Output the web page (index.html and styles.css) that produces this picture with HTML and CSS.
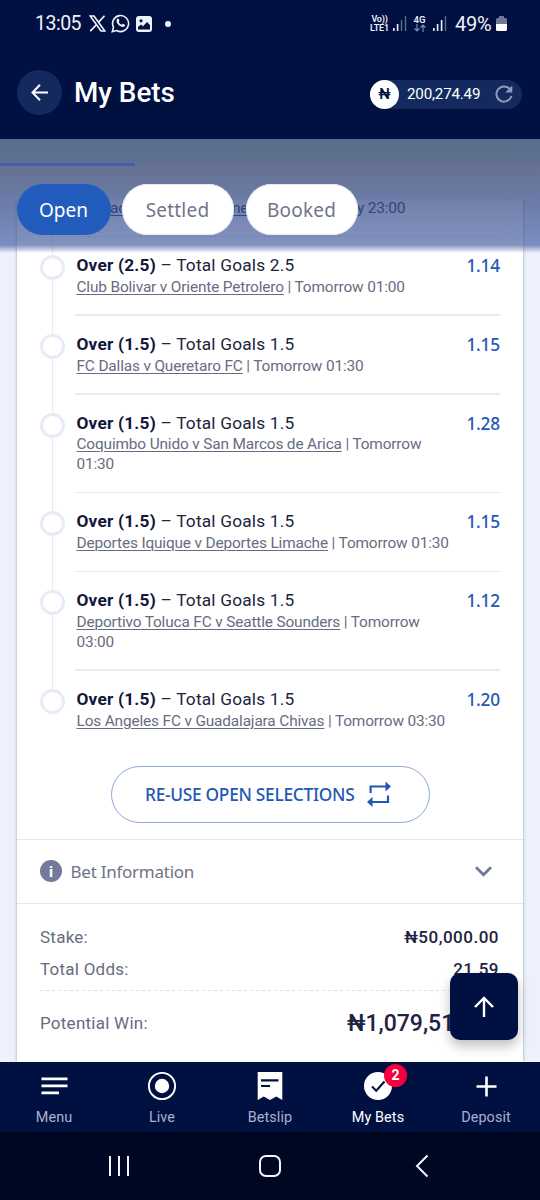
FILE: index.html
```html
<!DOCTYPE html>
<html lang="en">
<head>
<meta charset="utf-8">
<title>My Bets</title>
<link rel="stylesheet" href="styles.css">
</head>
<body>
<div class="app">
  <header class="top">
    <div class="status">
      <span class="clock">13:05</span>
      <svg class="s-x" width="17" height="17" viewBox="0 0 17 17" fill="none" stroke="#eef1fa"><path d="M1.200 1h3.800L15.800 16H12z" stroke-width="1.700"/><path d="M15.500.8 9.500 7.400M7.300 9.800 1.200 16.200" stroke-width="1.700"/></svg>
      <svg class="s-wa" width="19" height="19" viewBox="0 0 19 19"><path d="M1.300 17.700l1.200-4.500A8 8 0 1 1 5.700 16.500z" fill="none" stroke="#eef1fa" stroke-width="1.600"/><path d="M6.300 4.800c.5-.5 1.200-.3 1.400.2l.7 1.600c.1.500-.7 1.100-.6 1.400.6 1.300 1.600 2.200 2.900 2.700.400.100.9-1.100 1.400-.9l1.700.9c.5.300.2 1.300-.4 1.800-2.500 1.800-8.500-2.400-7.800-6 .1-.7.300-1.300.7-1.700z" fill="#eef1fa"/></svg>
      <svg class="s-img" width="16" height="16" viewBox="0 0 16 16"><rect width="16" height="16" rx="3" fill="#eef1fa"/><circle cx="5" cy="4.800" r="1.600" fill="#001041"/><path d="M2 13.500V11l3-2.500 2 1.800L11 6l3 3v4.500z" fill="#001041"/></svg>
      <i class="s-dot"></i>
      <span class="volte"><b>Vo))</b><b>LTE1</b></span>
      <svg class="s-sig1" width="14" height="15" viewBox="0 0 14 15" fill="#eef1fa"><path d="M0 12h1.600v3H0zM3.800 8h1.600v7H3.800z"/><path d="M7.800 4h1.400v11H7.800zM11.800 0h1.400v15h-1.400z" opacity=".4"/></svg>
      <span class="net"><b>4G</b><svg width="12" height="8" viewBox="0 0 12 8" fill="none" stroke="#818aac" stroke-width="1.200"><path d="M3 0v7M.5 4.500 3 7l2.500-2.500M9 8V1M6.500 3.500 9 1l2.500 2.500"/></svg></span>
      <svg class="s-sig2" width="14" height="15" viewBox="0 0 14 15" fill="#eef1fa"><path d="M0 12h1.600v3H0zM3.800 8h1.600v7H3.800zM7.800 4h1.600v11H7.800z"/><path d="M11.800 0h1.400v15h-1.400z" opacity=".4"/></svg>
      <span class="pct">49%</span>
      <svg class="s-bat" width="11" height="15" viewBox="0 0 11 15"><path d="M3 0h5v2h1.500Q11 2 11 3.500V8H0V3.500Q0 2 1.500 2H3z" fill="#6f7897"/><path d="M0 8h11v5.500q0 1.500-1.500 1.500h-8Q0 15 0 13.500z" fill="#fff"/></svg>
    </div>
    <div class="titlebar">
      <button class="back"><svg width="18" height="18" viewBox="0 0 18 18" fill="none" stroke="#fff" stroke-width="2"><path d="M17 8.500H1.500M9 .8 1.500 8.500 9 16.200"/></svg></button>
      <h1>My Bets</h1>
      <div class="balance">
        <span class="coin">₦</span><span class="amount">200,274.49</span>
        <svg width="18" height="18" viewBox="0 0 18 18" fill="none" stroke="#8f9bb9" stroke-width="2"><path d="M14.800 4A7.600 7.600 0 1 0 16.400 11"/><path d="M17.300.500V7.500H10.300z" fill="#8f9bb9" stroke="none"/></svg>
      </div>
    </div>
  </header>

  <main class="content">
    <div class="scroll">
      <section class="card">
        <div class="bets">
          <article class="bet cut">
            <div class="pieces"><u>ac</u><u>ne</u><span>y 23:00</span></div>
          </article>
          <article class="bet"><i class="ring"></i><div class="body"><div class="name"><b>Over (2.5)</b> – Total Goals 2.5</div><div class="meta"><u>Club Bolivar v Oriente Petrolero</u> | Tomorrow 01:00</div></div><span class="odd">1.14</span></article>
          <article class="bet"><i class="ring"></i><div class="body"><div class="name"><b>Over (1.5)</b> – Total Goals 1.5</div><div class="meta"><u>FC Dallas v Queretaro FC</u> | Tomorrow 01:30</div></div><span class="odd">1.15</span></article>
          <article class="bet tall"><i class="ring"></i><div class="body"><div class="name"><b>Over (1.5)</b> – Total Goals 1.5</div><div class="meta"><u>Coquimbo Unido v San Marcos de Arica</u> | Tomorrow<br>01:30</div></div><span class="odd">1.28</span></article>
          <article class="bet"><i class="ring"></i><div class="body"><div class="name"><b>Over (1.5)</b> – Total Goals 1.5</div><div class="meta"><u>Deportes Iquique v Deportes Limache</u> | Tomorrow 01:30</div></div><span class="odd">1.15</span></article>
          <article class="bet tall"><i class="ring"></i><div class="body"><div class="name"><b>Over (1.5)</b> – Total Goals 1.5</div><div class="meta"><u>Deportivo Toluca FC v Seattle Sounders</u> | Tomorrow<br>03:00</div></div><span class="odd">1.12</span></article>
          <article class="bet last"><i class="ring"></i><div class="body"><div class="name"><b>Over (1.5)</b> – Total Goals 1.5</div><div class="meta"><u>Los Angeles FC v Guadalajara Chivas</u> | Tomorrow 03:30</div></div><span class="odd">1.20</span></article>
        </div>
        <button class="reuse"><span>RE-USE OPEN SELECTIONS</span><svg width="24" height="26" viewBox="0 0 24 26" fill="none" stroke="#1f59b5" stroke-width="2.200"><path d="M3.600 12V5.500H19M21 14.500v6.500H5"/><path d="M18.500.500 24 5.500l-5.500 5zM5.500 16 0 21l5.500 5z" fill="#1f59b5" stroke="none"/></svg></button>
        <div class="info"><span class="i-icon">i</span><span class="i-text">Bet Information</span><svg width="17" height="11" viewBox="0 0 17 11" fill="none" stroke="#70799a" stroke-width="2.800"><path d="M1 1.200l7.500 7.500L16 1.200"/></svg></div>
        <div class="totals">
          <div class="line"><span>Stake:</span><b>₦50,000.00</b></div>
          <div class="line second"><span>Total Odds:</span><b>21.59</b></div>
          <svg class="dash" height="1" width="460"><path d="M0 .5h460" stroke="#dfe3f4" stroke-dasharray="3.500 2.500"/></svg>
          <div class="line win"><span>Potential Win:</span><b>₦1,079,51</b></div>
        </div>
      </section>
    </div>
    <div class="veil"><i class="progress"></i></div>
    <nav class="tabs"><button class="tab on">Open</button><button class="tab">Settled</button><button class="tab">Booked</button></nav>
    <button class="up"><svg width="20" height="21" viewBox="0 0 20 21" fill="none" stroke="#fff" stroke-width="2.400"><path d="M10 21V2M1 11l9-9 9 9"/></svg></button>
  </main>

  <nav class="bottom">
    <a class="item"><svg width="28" height="28" viewBox="0 0 28 28" fill="#fff"><path d="M1.500 5.500h26v2.700h-26zM1.500 12.600h26v2.700h-26zM1.500 19.500h17.500v2.700H1.500z"/></svg><span>Menu</span></a>
    <a class="item"><svg width="28" height="28" viewBox="0 0 28 28"><circle cx="14" cy="14" r="13.100" fill="none" stroke="#fff" stroke-width="1.900"/><circle cx="14" cy="14" r="7.200" fill="#fff"/></svg><span>Live</span></a>
    <a class="item"><svg width="28" height="28" viewBox="0 0 28 28"><path d="M1.700 0h24.600v28L20.300 24.500 14 28l-6.300-3.500L1.700 28z" fill="#fff"/><path d="M5 8.300h17.500M5 14h9" stroke="#001041" stroke-width="2.200"/></svg><span>Betslip</span></a>
    <a class="item active"><svg width="28" height="28" viewBox="0 0 28 28"><circle cx="14" cy="14" r="14" fill="#fff"/><path d="M8 14.500l4.200 4.200L20.500 9.500" fill="none" stroke="#001041" stroke-width="2"/></svg><em class="badge">2</em><span>My Bets</span></a>
    <a class="item"><svg width="28" height="28" viewBox="0 0 28 28" fill="none" stroke="#fff" stroke-width="2.600"><path d="M14.500 4.500v20M4.500 14.500h20"/></svg><span>Deposit</span></a>
  </nav>
  <footer class="system">
    <svg width="22" height="22" viewBox="0 0 22 22" stroke="#f4f6fc" stroke-width="2"><path d="M2 1v20M11 1v20M20 1v20"/></svg>
    <svg width="24" height="24" viewBox="0 0 24 24" fill="none" stroke="#f4f6fc" stroke-width="2"><rect x="2" y="2" width="20" height="20" rx="6"/></svg>
    <svg width="14" height="24" viewBox="0 0 14 24" fill="none" stroke="#f4f6fc" stroke-width="2"><path d="M12.500 1.500 2 12l10.500 10.500"/></svg>
  </footer>
</div>
</body>
</html>
```
FILE: styles.css
```css
* { box-sizing: border-box; }
body { margin: 0; font-family: Roboto, "Noto Sans", sans-serif; }
button { font: inherit; border: 0; padding: 0; }
svg { display: block; flex: none; }
.app { width: 540px; height: 1200px; display: flex; flex-direction: column; overflow: hidden; }

/* header */
.top { height: 139px; background: #001041; color: #fff; flex: none; }
.status { height: 47px; padding-left: 35px; display: flex; align-items: center; color: #eef1fa; }
.clock { font-size: 19.500px; width: 54px; white-space: nowrap; letter-spacing: -.5px; }
.s-wa { margin-left: 5px; }
.s-img { margin-left: 6px; }
.s-dot { width: 6px; height: 6px; border-radius: 50%; background: #eef1fa; margin-left: 13px; }
.volte { display: flex; flex-direction: column; align-items: center; margin-left: 199px; width: 19px; font-size: 9px; line-height: 8.500px; }
.volte b { font-weight: 600; letter-spacing: -.2px; }
.s-sig1 { margin-left: 4px; }
.net { display: flex; flex-direction: column; align-items: center; margin-left: 6px; width: 13px; font-size: 9.500px; line-height: 9px; }
.net b { font-weight: 600; }
.s-sig2 { margin-left: 7px; }
.pct { font-size: 20px; margin-left: 8px; width: 38px; letter-spacing: -.3px; }
.s-bat { margin-left: 3px; }
.titlebar { display: flex; align-items: center; height: 91px; padding: 0 18px 0 17px; }
.back { width: 45px; height: 45px; border-radius: 50%; background: #142a5e; display: flex; align-items: center; justify-content: center; }
h1 { margin: 0 0 0 12px; font-size: 27.800px; font-weight: 500; line-height: 34px; }
.balance { margin-left: auto; width: 152px; height: 29px; margin-top: 3px; border-radius: 15px; background: #142a5e; display: flex; align-items: center; }
.coin { width: 29px; height: 29px; border-radius: 50%; background: #fff; color: #001041; font-weight: 500; font-size: 15px; display: flex; align-items: center; justify-content: center; }
.amount { width: 88px; margin-left: 8px; font-size: 15.200px; letter-spacing: -.2px; }

/* page */
.content { position: relative; height: 923px; flex: none; background: #ecf1fb; padding-top: 61px; }
.scroll { height: 862px; overflow: hidden; padding: 0 17px; }
.card { background: #fff; height: 862px; box-shadow: 0 0 3px rgba(40,50,90,.4); }
.bets { padding: 0 23px; }
.bet { position: relative; display: flex; height: 78.800px; }
.bet.tall { height: 98.700px; }
.bet.cut { height: 37.200px; }
.bet::before { content: ""; position: absolute; left: 11.500px; top: 0; bottom: 0; width: 1.500px; background: #e6ebf6; }
.bet.last::before { bottom: auto; height: 30px; }
.bet::after { content: ""; position: absolute; left: 35px; right: 0; bottom: 0; height: 1.500px; background: #e4ebf5; }
.bet.last { height: 94.900px; }
.bet.last::after { display: none; }
.pieces { display: grid; grid-template-columns: 122px 125px auto; padding-left: 70px; font-size: 15.500px; letter-spacing: -.2px; line-height: 17px; color: #3a456e; white-space: nowrap; }
.ring { position: relative; width: 25px; height: 25px; margin-top: 18px; border: 3px solid #e6ebf6; border-radius: 50%; background: #fff; flex: none; }
.body { flex: 1; margin-left: 11.500px; padding-top: 15.800px; white-space: nowrap; }
.name { font-size: 17.300px; line-height: 24px; color: #1d2340; letter-spacing: .2px; }
.name b { font-weight: 700; color: #10173a; }
.meta { font-size: 15.400px; line-height: 20px; color: #676c80; margin-top: -.2px; letter-spacing: -.15px; }
u { text-underline-offset: 1.500px; text-decoration-thickness: 1px; }
.odd { font-family: "Noto Sans", sans-serif; font-weight: 500; font-size: 17.300px; letter-spacing: -.2px; line-height: 24px; padding-top: 17px; color: #1f59b5; }
.reuse { display: flex; align-items: center; width: 319px; height: 57px; margin: 0 0 0 94px; padding-left: 33px; border: 1.500px solid #8ea9da; border-radius: 29px; background: #fff; color: #1f59b5; font-family: "Noto Sans", sans-serif; font-weight: 500; font-size: 17.300px; letter-spacing: -.27px; white-space: nowrap; }
.reuse span { width: 222px; text-align: left; }
.info { height: 65px; margin-top: 16px; padding: 0 31px 0 23px; border-top: 1.500px solid #e2e7f5; border-bottom: 1.500px solid #e2e7f5; display: flex; align-items: center; font-family: "Noto Sans", sans-serif; color: #6e7386; }
.i-icon { width: 22px; height: 22px; border-radius: 50%; background: #727b9b; color: #fff; font-weight: 700; font-size: 15px; line-height: 22px; text-align: center; }
.i-text { margin-left: 8.500px; font-size: 17px; flex: 1; letter-spacing: -.25px; }
.totals { padding: 17.500px 24px 0 23px; }
.line { display: flex; justify-content: space-between; height: 31.500px; align-items: center; font-size: 17px; letter-spacing: .25px; color: #676c80; }
.line b { font-weight: 500; color: #1d2340; letter-spacing: .5px; }
.dash { margin-top: 5.500px; }
.win { margin-top: 16px; }
.line.win b { font-size: 23px; width: 152px; letter-spacing: 0; padding-top: 1px; }

/* translucent band behind the filter tabs */
.veil { position: absolute; inset: 0 0 auto 0; height: 114px; background: linear-gradient(rgba(11,38,80,.65) 0, rgba(15,42,82,.65) 17px, rgba(30,46,92,.65) 30px, rgba(38,60,123,.65) 61px, rgba(63,88,158,.65) 106px, rgba(63,88,158,0) 114px); }
.progress { display: block; width: 135px; height: 3px; margin-top: 24px; background: rgba(56,88,180,.7); filter: blur(.6px); }
.tabs { position: absolute; left: 17px; top: 45px; display: flex; gap: 12px; }
.tab { width: 112px; height: 51px; border-radius: 26px; background: #fff; color: #70758a; font-family: "Noto Sans", sans-serif; font-size: 19px; letter-spacing: .2px; padding-right: 1px; box-shadow: inset 0 0 0 1px #e2e8f8; }
.tab.on { width: 94px; margin-right: -1px; background: #225cbc; color: #fff; box-shadow: none; letter-spacing: 0; }
.up { position: absolute; left: 450px; top: 834px; width: 67.500px; height: 67px; border-radius: 10px; background: #001041; display: flex; align-items: center; justify-content: center; box-shadow: 0 6px 12px rgba(0,0,0,.25); }

/* bottom bars */
.bottom { height: 70px; flex: none; background: #001041; display: grid; grid-template-columns: repeat(5, 108px); }
.item { position: relative; display: flex; flex-direction: column; align-items: center; padding-top: 10px; font-size: 14.400px; line-height: 18px; color: #a9b2cf; letter-spacing: .1px; }
.item span { margin-top: 9px; }
.item.active { color: #fff; }
.badge { position: absolute; left: 60px; top: 2px; width: 23px; height: 23px; border-radius: 50%; background: #f8003f; color: #fff; font: 700 14px/23px Roboto, sans-serif; text-align: center; }
.system { height: 68px; flex: none; background: #000722; display: flex; align-items: center; gap: 128px; padding-left: 108px; }
.system svg:last-child { margin-left: 5px; }
```
